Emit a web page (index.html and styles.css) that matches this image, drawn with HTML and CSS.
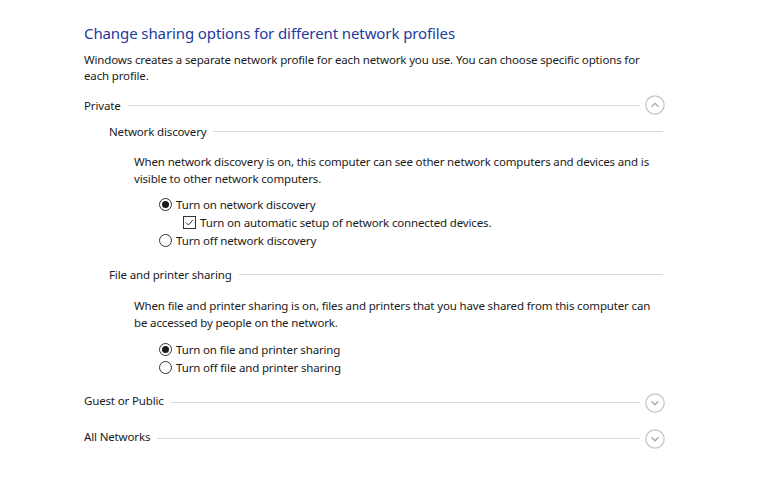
FILE: index.html
```html
<!DOCTYPE html>
<html>
<head>
<meta charset="utf-8">
<link rel="stylesheet" href="styles.css">
</head>
<body>
<div class="page">
  <h1 class="title">Change sharing options for different network profiles</h1>
  <p class="intro">Windows creates a separate network profile for each network you use. You can choose specific options for each profile.</p>

  <div class="profile">
    <div class="profile-head">
      <span class="label">Private</span>
      <span class="rule"></span>
      <span class="chev"><svg width="20" height="20" viewBox="0 0 20 20"><circle cx="10" cy="10" r="9.2" fill="none" stroke="#c4c4c4" stroke-width="1.2"/><path d="M6.5 11.8 L10 8.3 L13.5 11.8" fill="none" stroke="#a8a8a8" stroke-width="1.3"/></svg></span>
    </div>

    <div class="group">
      <div class="group-head"><span class="label">Network discovery</span><span class="rule"></span></div>
      <p class="desc">When network discovery is on, this computer can see other network computers and devices and is visible to other network computers.</p>
      <div class="options">
        <div class="opt"><span class="radio on"></span><span>Turn on network discovery</span></div>
        <div class="opt sub"><span class="check"><svg width="11" height="11" viewBox="0 0 11 11"><path d="M2 5.6 L4.4 8 L9 2.8" fill="none" stroke="#333" stroke-width="1"/></svg></span><span>Turn on automatic setup of network connected devices.</span></div>
        <div class="opt"><span class="radio"></span><span>Turn off network discovery</span></div>
      </div>
    </div>

    <div class="group second">
      <div class="group-head"><span class="label">File and printer sharing</span><span class="rule"></span></div>
      <p class="desc">When file and printer sharing is on, files and printers that you have shared from this computer can be accessed by people on the network.</p>
      <div class="options">
        <div class="opt"><span class="radio on"></span><span>Turn on file and printer sharing</span></div>
        <div class="opt"><span class="radio"></span><span>Turn off file and printer sharing</span></div>
      </div>
    </div>
  </div>

  <div class="collapsed first">
    <span class="label">Guest or Public</span>
    <span class="rule"></span>
    <span class="chev"><svg width="20" height="20" viewBox="0 0 20 20"><circle cx="10" cy="10" r="9.2" fill="none" stroke="#c4c4c4" stroke-width="1.2"/><path d="M6.5 8.3 L10 11.8 L13.5 8.3" fill="none" stroke="#a8a8a8" stroke-width="1.3"/></svg></span>
  </div>
  <div class="collapsed">
    <span class="label">All Networks</span>
    <span class="rule"></span>
    <span class="chev"><svg width="20" height="20" viewBox="0 0 20 20"><circle cx="10" cy="10" r="9.2" fill="none" stroke="#c4c4c4" stroke-width="1.2"/><path d="M6.5 8.3 L10 11.8 L13.5 8.3" fill="none" stroke="#a8a8a8" stroke-width="1.3"/></svg></span>
  </div>
</div>
</body>
</html>
```
FILE: styles.css
```css
html, body {
  margin: 0;
  padding: 0;
  background: #ffffff;
}
body {
  font-family: "Noto Sans", "Open Sans", sans-serif;
  font-size: 11.5px;
  letter-spacing: -0.15px;
  color: #1a1a1a;
}
.page {
  width: 581px;
  padding: 22px 0 0 84px;
}
.title {
  margin: 0;
  font-size: 15px;
  letter-spacing: -0.1px;
  font-weight: 400;
  color: #1e3a9e;
  line-height: 22px;
}
.intro {
  margin: 8px 0 0 0;
  line-height: 16px;
  width: 575px;
}
.profile-head, .group-head {
  display: flex;
  align-items: center;
  height: 20px;
}
.profile {
  margin-top: 11px;
}
.label {
  white-space: nowrap;
}
.rule {
  flex: 1;
  height: 0;
  border-top: 1px solid #d9d9d9;
  margin-left: 7px;
}
.chev {
  display: flex;
  flex: none;
  width: 20px;
  height: 20px;
  margin-left: 5px;
}
.group {
  padding-left: 25px;
}
.group-head {
  margin-top: 6px;
}
.group.second {
  margin-top: 15px;
}
.group-head .rule {
  margin-right: 2px;
}
.desc {
  margin: 12px 0 0 25px;
  line-height: 17px;
  width: 525px;
}
.second .desc {
  margin-top: 13px;
}
.options {
  margin: 8px 0 0 50px;
}
.second .options {
  margin-top: 9px;
}
.opt {
  display: flex;
  align-items: center;
  height: 18px;
  gap: 4px;
}
.opt.sub {
  padding-left: 24px;
}
.radio {
  width: 11px;
  height: 11px;
  border: 1px solid #333;
  border-radius: 50%;
  display: flex;
  align-items: center;
  justify-content: center;
}
.radio.on::after {
  content: "";
  width: 7px;
  height: 7px;
  border-radius: 50%;
  background: #1a1a1a;
}
.check {
  width: 11px;
  height: 11px;
  border: 1px solid #333;
  display: flex;
}
.collapsed {
  display: flex;
  align-items: flex-start;
  height: 23px;
  margin-top: 13px;
}
.collapsed .label {
  line-height: 20px;
  padding-top: 1px;
}
.collapsed .rule {
  margin-top: 12px;
}
.collapsed .chev {
  margin-top: 3px;
}
.collapsed.first {
  margin-top: 14px;
}
```
